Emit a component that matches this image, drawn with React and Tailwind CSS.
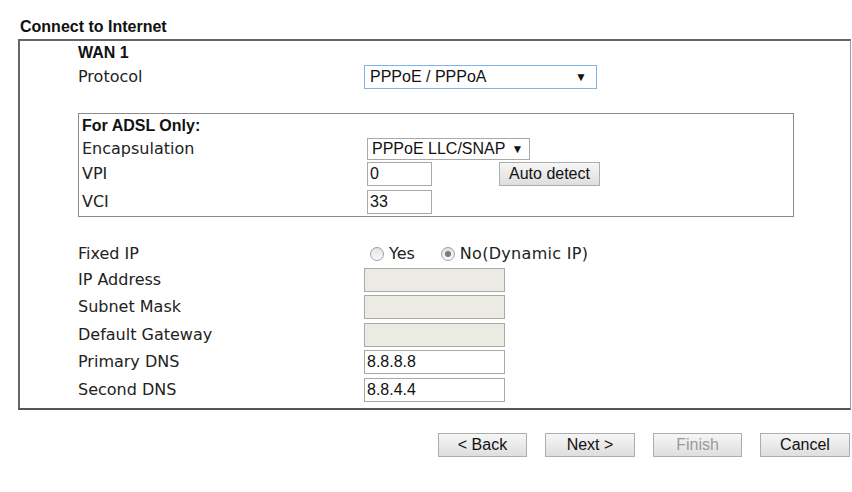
import React from 'react'

const verdana = { fontFamily: '"DejaVu Sans", Verdana, sans-serif' }

function Box({ w, value, disabled, className = '' }) {
  return (
    <div
      className={`h-[24px] border border-[#a9a9a9] flex items-center pl-[2px] text-[16px] text-[#111] font-['Liberation_Sans',Arial,sans-serif] ${disabled ? 'bg-[#ebebe4]' : 'bg-white'} ${className}`}
      style={{ width: w }}
    >
      {value}
    </div>
  )
}

function Radio({ checked }) {
  return (
    <span className="w-[14px] h-[14px] rounded-full border border-[#a0a0a0] bg-gradient-to-b from-[#e2e2e2] to-[#fbfbfb] flex items-center justify-center">
      {checked && <span className="w-[6px] h-[6px] rounded-full bg-[#7a7a7a]" />}
    </span>
  )
}

function Btn({ children, w, dim }) {
  return (
    <button
      className={`h-[24px] border border-[#adadad] bg-gradient-to-b from-[#f6f6f6] to-[#dedede] text-[16px] leading-none font-['Liberation_Sans',Arial,sans-serif] ${dim ? 'text-[#9a9a9a]' : 'text-[#111]'}`}
      style={{ width: w }}
    >
      {children}
    </button>
  )
}

function Row({ label, h, children }) {
  return (
    <div className="flex items-center" style={{ height: h }}>
      <div className="w-[286px] text-[16px] leading-none text-[#222]" style={verdana}>{label}</div>
      {children}
    </div>
  )
}

export default function App() {
  return (
    <div className="w-[852px] h-[492px] bg-white">
      <div className="h-[39px] pl-[20px] pt-[18px] text-[16px] font-bold text-[#111] font-['Liberation_Sans',Arial,sans-serif] leading-[18px]">
        Connect to Internet
      </div>

      <div className="ml-[18px] w-[833px] border-t-2 border-l-2 border-b-2 border-r border-t-[#666] border-l-[#666] border-b-[#555] border-r-[#9a9a9a] pl-[58px] pb-[4px]">
        <div className="h-[24px] flex items-center text-[16px] font-bold text-[#111] font-['Liberation_Sans',Arial,sans-serif]">WAN 1</div>
        <Row label="Protocol" h="24px">
          <div className="w-[233px] h-[24px] border border-[#7eb4ea] bg-white flex items-center justify-between pl-[5px] pr-[9px] text-[16px] text-[#111] font-['Liberation_Sans',Arial,sans-serif]">
            <span>PPPoE / PPPoA</span>
            <span className="text-[12px]">▼</span>
          </div>
        </Row>
        <div className="h-[24px]" />

        <div className="w-[716px] border border-[#8a8a8a] pl-[3px]">
          <div className="h-[23px] flex items-center text-[16px] font-bold text-[#111] font-['Liberation_Sans',Arial,sans-serif]">For ADSL Only:</div>
          <div className="flex items-center h-[23px]">
            <div className="w-[285px] text-[16px] leading-none text-[#222]" style={verdana}>Encapsulation</div>
            <div className="w-[163px] h-[22px] border border-[#a9a9a9] bg-white flex items-center pl-[4px] text-[16px] text-[#111] font-['Liberation_Sans',Arial,sans-serif]">
              <span>PPPoE LLC/SNAP</span>
              <span className="text-[12px] ml-[6px]">▼</span>
            </div>
          </div>
          <div className="flex items-center h-[28px]">
            <div className="w-[285px] text-[16px] leading-none text-[#222]" style={verdana}>VPI</div>
            <Box w="65px" value="0" />
            <div className="w-[67px]" />
            <Btn w="101px">Auto detect</Btn>
          </div>
          <div className="flex items-center h-[28px]">
            <div className="w-[285px] text-[16px] leading-none text-[#222]" style={verdana}>VCI</div>
            <Box w="65px" value="33" />
          </div>
        </div>

        <div className="h-[24px]" />
        <Row label="Fixed IP" h="25px">
          <div className="flex items-center pl-[6px] text-[16px] leading-none text-[#222]" style={verdana}>
            <Radio />
            <span className="ml-[5px]">Yes</span>
            <span className="ml-[26px]"><Radio checked /></span>
            <span className="ml-[5px] tracking-[0.3px]">No(Dynamic IP)</span>
          </div>
        </Row>
        <Row label="IP Address" h="27.5px"><Box w="141px" disabled /></Row>
        <Row label="Subnet Mask" h="27.5px"><Box w="141px" disabled /></Row>
        <Row label="Default Gateway" h="27.5px"><Box w="141px" disabled /></Row>
        <Row label="Primary DNS" h="27.5px"><Box w="141px" value="8.8.8.8" /></Row>
        <Row label="Second DNS" h="27.5px"><Box w="141px" value="8.8.4.4" /></Row>
      </div>

      <div className="flex justify-end pr-[2px] mt-[23px] gap-[18px]">
        <Btn w="89px">&lt; Back</Btn>
        <Btn w="90px">Next &gt;</Btn>
        <Btn w="89px" dim>Finish</Btn>
        <Btn w="90px">Cancel</Btn>
      </div>
    </div>
  )
}
